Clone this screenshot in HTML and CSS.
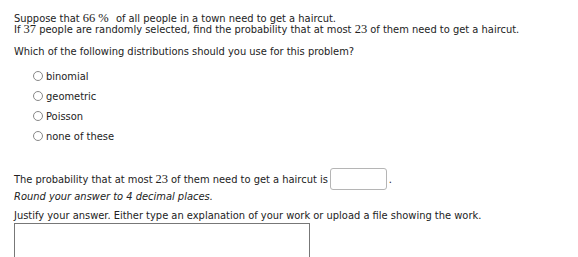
FILE: index.html
```html
<!DOCTYPE html>
<html lang="en">

<head>
  <meta charset="UTF-8">
  <title>Haircut probability</title>
  <link rel="stylesheet" href="styles.css">
</head>

<body>
  <div class="problem">
    <p class="stem">
      Suppose that <span class="m">66</span><span class="m pct">%</span> of all people in a town need to get a haircut.<br>
      If <span class="m">37</span> people are randomly selected, find the probability that at most <span class="m">23</span> of them need to get a haircut.
    </p>

    <p class="ask">Which of the following distributions should you use for this problem?</p>

    <ul class="choices">
      <li><span class="radio"></span>binomial</li>
      <li><span class="radio"></span>geometric</li>
      <li><span class="radio"></span>Poisson</li>
      <li><span class="radio"></span>none of these</li>
    </ul>

    <p class="answer">
      The probability that at most <span class="m">23</span> of them need to get a haircut is
      <span class="box"></span><span class="dot">.</span>
    </p>
    <p class="hint">Round your answer to 4 decimal places.</p>

    <p class="justify">Justify your answer. Either type an explanation of your work or upload a file showing the work.</p>
    <div class="work"></div>
  </div>
</body>

</html>
```

FILE: styles.css
```css
body,
html {
  margin: 0;
  padding: 0;
  background: white;
}

.problem {
  padding: 13px 0 0 14px;
  font-family: "DejaVu Sans Condensed", "DejaVu Sans", sans-serif;
  font-size: 11px;
  color: #222;
}

.problem p {
  margin: 0;
}

.m {
  font-family: "Liberation Serif", serif;
  font-size: 12.5px;
}

.pct {
  margin: 0 4px 0 3px;
}

.stem {
  line-height: 11px;
}

.ask {
  margin-top: 10px !important;
  line-height: 13px;
}

.choices {
  list-style: none;
  margin: 8px 0 0 0;
  padding: 0 0 0 19px;
}

.choices li {
  display: flex;
  align-items: center;
  height: 20px;
}

.radio {
  width: 8px;
  height: 8px;
  border: 1px solid #888;
  border-radius: 50%;
  margin-right: 3px;
}

.answer {
  display: flex;
  align-items: center;
  margin-top: 22px !important;
  height: 22px;
}

.answer .m {
  margin: 0 3px;
}

.box {
  display: inline-block;
  width: 55px;
  height: 20px;
  border: 1px solid #b5b5b5;
  border-radius: 3px;
  margin-left: 2px;
}

.dot {
  margin-left: 2px;
}

.hint {
  font-style: italic;
  line-height: 14px;
}

.justify {
  margin-top: 5px !important;
  line-height: 13px;
}

.work {
  width: 294px;
  height: 60px;
  border: 1px solid #777;
  margin-top: 1px;
}
```
